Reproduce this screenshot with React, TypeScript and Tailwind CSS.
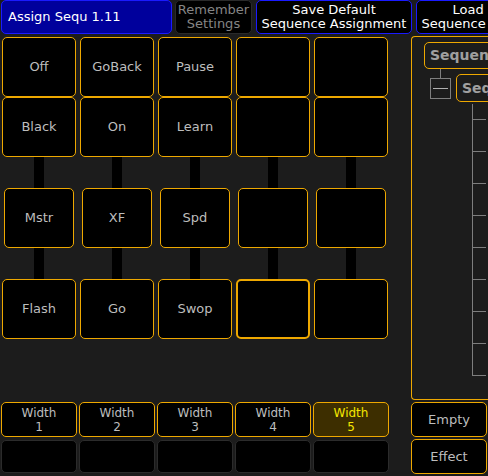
import React from "react";

const font = { fontFamily: '"DejaVu Sans", "Liberation Sans", sans-serif' };

const row1 = ["Off", "GoBack", "Pause", "", ""];
const row2 = ["Black", "On", "Learn", "", ""];
const faders = ["Mstr", "XF", "Spd", "", ""];
const row4 = ["Flash", "Go", "Swop", "", ""];

function PadRow({ labels, selected }: { labels: string[]; selected?: number }) {
  return (
    <div className="grid grid-cols-[repeat(5,74px)] gap-x-[4px] pl-[2px] h-[60px]">
      {labels.map((l, i) => (
        <div
          key={i}
          className={`flex items-center justify-center rounded-[5px] bg-black text-[13px] text-[#bdbdbd] border-[#eea800] ${
            selected === i ? "border-2" : "border"
          }`}
        >
          {l}
        </div>
      ))}
    </div>
  );
}

function TrackRow() {
  return (
    <div className="grid grid-cols-[repeat(5,74px)] gap-x-[4px] pl-[2px] h-[31px]">
      {[0, 1, 2, 3, 4].map((i) => (
        <div key={i} className="flex justify-center">
          <div className="w-[10px] h-full bg-black" />
        </div>
      ))}
    </div>
  );
}

export default function App() {
  return (
    <div
      className="w-[488px] h-[476px] overflow-hidden bg-[#1c1c1c] flex flex-col"
      style={font}
    >
      {/* top bar */}
      <div className="flex h-[34px] pl-[1px] shrink-0 text-[13px] leading-[14px]">
        <div className="w-[171px] shrink-0 flex items-center pl-[6px] rounded-[5px] bg-[#00009c] border border-[#1a1aff] text-white text-[13px]">
          Assign Sequ 1.11
        </div>
        <div className="w-[77px] shrink-0 ml-[3px] flex flex-col items-center justify-center rounded-[5px] bg-black border border-[#2a2a2a] text-[#858585]">
          <span>Remember</span>
          <span>Settings</span>
        </div>
        <div className="w-[156px] shrink-0 ml-[4px] flex flex-col items-center justify-center rounded-[5px] bg-black border border-[#1a1aff] text-white">
          <span>Save Default</span>
          <span>Sequence Assignment</span>
        </div>
        <div className="w-[156px] shrink-0 ml-[4px] flex flex-col items-center justify-center rounded-[5px] bg-black border border-[#1a1aff] text-white">
          <span>Load Default</span>
          <span>Sequence Assignment</span>
        </div>
      </div>

      <div className="flex mt-[3px] flex-1">
        {/* executor grid */}
        <div className="w-[390px] shrink-0 flex flex-col">
          <PadRow labels={row1} />
          <PadRow labels={row2} />
          <TrackRow />
          <div className="grid grid-cols-[repeat(5,70px)] gap-x-[8px] pl-[4px] h-[60px]">
            {faders.map((l, i) => (
              <div
                key={i}
                className="flex items-center justify-center rounded-[5px] bg-black border border-[#eea800] text-[13px] text-[#bdbdbd]"
              >
                {l}
              </div>
            ))}
          </div>
          <TrackRow />
          <PadRow labels={row4} selected={3} />

          <div className="grid grid-cols-[repeat(5,76px)] gap-x-[2px] pl-[1px] h-[35px] mt-[63px] text-[12px] leading-[14px]">
            {[1, 2, 3, 4, 5].map((n) => (
              <div
                key={n}
                className={`flex flex-col items-center justify-center rounded-[5px] border border-[#eea800] ${
                  n === 5 ? "bg-[#3d2e00] text-[#f5e600]" : "bg-black text-[#bdbdbd]"
                }`}
              >
                <span>Width</span>
                <span>{n}</span>
              </div>
            ))}
          </div>
          <div className="grid grid-cols-[repeat(5,76px)] gap-x-[2px] pl-[1px] h-[33px] mt-[3px]">
            {[1, 2, 3, 4, 5].map((n) => (
              <div key={n} className="rounded-[5px] bg-black border border-[#2b2b2b]" />
            ))}
          </div>
        </div>

        {/* right panel */}
        <div className="ml-[21px] flex flex-col -mt-[1px]">
          <div className="w-[110px] h-[364px] border-l border-t border-b border-[#eea800] rounded-bl-[4px] rounded-tl-[4px] pl-[12px] pt-[5px] overflow-hidden">
            <div className="w-[100px] h-[27px] flex items-center pl-[5px] rounded-[5px] border border-[#eea800] text-[14px] font-bold text-[#a0a0a0]">
              Sequence
            </div>
            <div className="flex">
              <div className="w-[21px] ml-[6px] flex flex-col items-center">
                <div className="w-px h-[9px] bg-[#7e7e7e]" />
                <div className="w-[21px] h-[21px] border border-[#7e7e7e] flex items-center justify-center">
                  <div className="w-[15px] h-px bg-[#b0b0b0]" />
                </div>
              </div>
              <div className="flex flex-col ml-[5px] mt-[5px]">
                <div className="w-[80px] h-[28px] flex items-center pl-[5px] rounded-[5px] border border-[#eea800] text-[14px] font-bold text-[#a0a0a0]">
                  Sequence
                </div>
                <div className="ml-[16px] mt-[2px] w-[14px] border-l border-[#7e7e7e]">
                  <div className="h-[16px] border-b border-[#7e7e7e]" />
                  {[0, 1, 2, 3, 4, 5, 6, 7].map((i) => (
                    <div key={i} className="h-[32px] border-b border-[#7e7e7e]" />
                  ))}
                </div>
              </div>
            </div>
          </div>
          <div className="w-[76px] h-[35px] mt-[2px] flex items-center justify-center rounded-[5px] bg-black border border-[#eea800] text-[13px] text-[#bdbdbd]">
            Empty
          </div>
          <div className="w-[76px] h-[35px] mt-[2px] flex items-center justify-center rounded-[5px] bg-black border border-[#eea800] text-[13px] text-[#bdbdbd]">
            Effect
          </div>
        </div>
      </div>
    </div>
  );
}
